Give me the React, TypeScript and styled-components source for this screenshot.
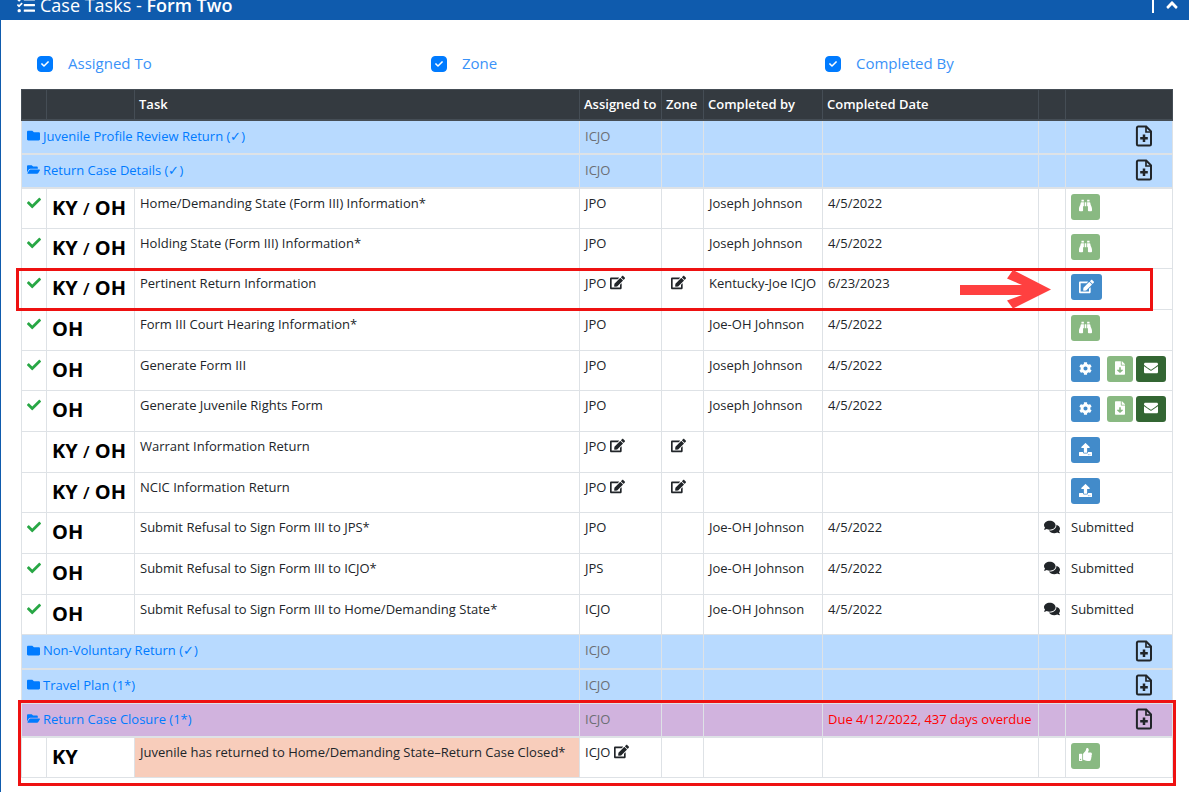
import React, { ReactNode } from "react";
import styled, { createGlobalStyle } from "styled-components";
import {
  FaAngleUp,
  FaBinoculars,
  FaCheck,
  FaCog,
  FaComments,
  FaEdit,
  FaEnvelope,
  FaFileDownload,
  FaFolder,
  FaFolderOpen,
  FaTasks,
  FaThumbsUp,
  FaUpload,
} from "react-icons/fa";

const colors = {
  brand: "#0f5bad",
  link: "#007bff",
  line: "#dee2e6",
  dark: "#343a40",
  text: "#212529",
  blueRow: "#b8daff",
  purpleRow: "#d1b3de",
  due: "#f8cdbb",
  marker: "#ee1111",
  green: "#89b982",
  darkGreen: "#336633",
  blue: "#428bca",
};

const GlobalStyle = createGlobalStyle`
  *, *::before, *::after { box-sizing: border-box; }
  body {
    margin: 0;
    background: #fff;
    color: ${colors.text};
    font-family: "Open Sans", "Noto Sans", sans-serif;
    font-size: 13px;
    line-height: 20px;
  }
  button, input { font: inherit; margin: 0; }
`;

const Panel = styled.section`
  min-height: 100vh;
  border-left: 1px solid ${colors.brand};
  overflow: hidden;
`;

const PanelHeader = styled.header`
  display: flex;
  align-items: flex-end;
  justify-content: space-between;
  height: 20px;
  padding: 0 8px 0 16px;
  overflow: hidden;
  background: ${colors.brand};
  color: #fff;
`;

const Title = styled.h1`
  display: flex;
  align-items: center;
  gap: 5px;
  margin: 0;
  font-size: 18px;
  font-weight: 400;
  line-height: 30px;
  white-space: nowrap;
  b { font-weight: 600; }
`;

const HeaderTools = styled.div`
  display: flex;
  align-items: center;
  gap: 9px;
  height: 30px;
`;

const Divider = styled.span`
  width: 2px;
  height: 16px;
  background: #fff;
`;

const CollapseButton = styled.button`
  display: flex;
  padding: 0;
  border: 0;
  background: none;
  color: #fff;
  font-size: 18px;
`;

const Filters = styled.div`
  display: grid;
  grid-template-columns: repeat(3, 1fr);
  margin: 32px 6px 13px 0;
`;

const FilterLabel = styled.label`
  display: flex;
  align-items: center;
  gap: 15px;
  padding-left: 36px;
  color: #3a92f8;
  font-size: 15px;
  font-weight: 500;
  line-height: 24px;
`;

const FilterText = styled.span`
  line-height: 22px;
  padding-bottom: 2px;
`;

const TickBox = styled.span`
  position: relative;
  display: flex;
  width: 16px;
  height: 16px;

  input {
    appearance: none;
    width: 16px;
    height: 16px;
    border: 1px solid ${colors.link};
    border-radius: 4px;
    background: #fff;
  }
  input:checked { background: ${colors.link}; }
  svg {
    position: absolute;
    top: 4px;
    left: 4px;
    width: 8px;
    height: 8px;
    color: #fff;
    pointer-events: none;
  }
`;

const TableWrap = styled.div`
  padding: 0 16px 12px 20px;
`;

const Table = styled.table`
  width: 100%;
  table-layout: fixed;
  border-collapse: collapse;
`;

const Col = styled.col<{ $w?: number }>`
  width: ${(p) => (p.$w ? `${p.$w}px` : "auto")};
`;

const HeadCell = styled.th`
  height: 30px;
  padding: 0 4px;
  border: 1px solid #454d55;
  border-bottom-width: 2px;
  background: ${colors.dark};
  color: #fff;
  font-weight: 600;
  text-align: left;
  white-space: nowrap;
`;

const Group = styled.tbody`
  position: relative;
`;

const GroupRow = styled.tr<{ $overdue?: boolean }>`
  height: 34px;
  background: ${(p) => (p.$overdue ? colors.purpleRow : colors.blueRow)};
`;

const GroupCell = styled.td`
  padding: 0 5px 2px;
  border: 1px solid ${colors.line};
  border-bottom-width: 2px;
  color: #6c6f74;
  font-weight: 500;
  white-space: nowrap;
`;

const GroupLink = styled.a`
  display: flex;
  align-items: center;
  gap: 3px;
  color: ${colors.link};
  text-decoration: none;
  svg { width: auto; height: 13px; }
`;

const Overdue = styled.span`
  color: #f00;
`;

const AddCell = styled(GroupCell)`
  text-align: right;
  padding-right: 19px;
`;

const AddButton = styled.button`
  display: inline-flex;
  padding: 0;
  border: 0;
  background: none;
  color: ${colors.text};
  vertical-align: middle;
`;

const TaskRow = styled.tr`
  position: relative;
  height: 41px;
  &:nth-child(3n) { height: 40px; }
`;

const Cell = styled.td<{ $due?: boolean }>`
  padding: 4px 5px 0;
  border: 1px solid ${colors.line};
  background: ${(p) => (p.$due ? colors.due : "transparent")};
  font-weight: ${(p) => (p.$due ? 500 : 400)};
  vertical-align: top;
  white-space: nowrap;
`;

const StatusCell = styled(Cell)`
  color: #28a745;
  svg { display: block; font-size: 14px; margin-top: 3px; }
`;

const StateCell = styled(Cell)`
  padding-top: 7px;
  color: #000;
  font-size: 20px;
  font-weight: 700;
  line-height: 24px;
  small { font-size: 17px; font-weight: 600; }
`;

const InlineIconButton = styled.button`
  display: inline-flex;
  padding: 0;
  border: 0;
  background: none;
  color: ${colors.text};
  font-size: 15px;
  line-height: 16px;
  vertical-align: -2px;
`;

const ZoneCell = styled(Cell)`
  padding-left: 9px;
`;

const NotesCell = styled(Cell)`
  svg { display: block; font-size: 16px; margin-top: 2px; }
`;

const Submitted = styled.span`
  font-weight: 500;
`;

const Actions = styled.div`
  display: flex;
  gap: 3px;
`;

const ActionButton = styled.button<{ $tone: string; $gapAfter?: boolean; $narrow?: boolean }>`
  display: flex;
  align-items: center;
  justify-content: center;
  height: 26px;
  padding: 0 8px 2px;
  margin-top: 1px;
  margin-right: ${(p) => (p.$gapAfter ? "4px" : "0")};
  border: 0;
  border-radius: 3px;
  background: ${(p) => p.$tone};
  color: #fff;
  font-size: 13px;
  svg { ${(p) => (p.$narrow ? "width: 10px; height: 14px;" : "")} }
`;

const RowMarker = styled.span`
  position: absolute;
  top: -1px;
  right: 20px;
  bottom: -1px;
  left: -6px;
  border: 3px solid ${colors.marker};
  pointer-events: none;
`;

const GroupMarker = styled.span`
  position: absolute;
  top: -3px;
  right: -3px;
  bottom: -8px;
  left: -4px;
  border: 3px solid ${colors.marker};
  pointer-events: none;
`;

const Arrow = styled.svg`
  position: absolute;
  top: 1px;
  right: 122px;
  width: 91px;
  height: 39px;
  pointer-events: none;
`;

const AddFileIcon = () => (
  <svg width="18" height="22" viewBox="0 0 18 22" fill="none" stroke="currentColor" aria-hidden="true">
    <path d="M3.2 1.6h8L16 6.4v12.8a1.300 1.300 0 0 1-1.300 1.300H3.200a1.300 1.300 0 0 1-1.300-1.300V2.900a1.300 1.300 0 0 1 1.300-1.300z" strokeWidth="2" />
    <path d="M11 2v5h5" strokeWidth="1.700" />
    <path d="M9 9.500v7.500M5.200 13.200h7.600" strokeWidth="2.500" />
  </svg>
);

type Kind = "view" | "edit" | "generate" | "upload" | "submitted" | "approve";

interface Task {
  done?: boolean;
  state: string;
  name: string;
  assigned: string;
  canAssign?: boolean;
  canZone?: boolean;
  by?: string;
  date?: string;
  kind: Kind;
  marked?: boolean;
  due?: boolean;
}

interface TaskGroup {
  name: string;
  open?: boolean;
  overdue?: string;
  tasks: Task[];
}

const groups: TaskGroup[] = [
  { name: "Juvenile Profile Review Return (✓)", tasks: [] },
  {
    name: "Return Case Details (✓)",
    open: true,
    tasks: [
      { done: true, state: "KY / OH", name: "Home/Demanding State (Form III) Information*", assigned: "JPO", by: "Joseph Johnson", date: "4/5/2022", kind: "view" },
      { done: true, state: "KY / OH", name: "Holding State (Form III) Information*", assigned: "JPO", by: "Joseph Johnson", date: "4/5/2022", kind: "view" },
      { done: true, state: "KY / OH", name: "Pertinent Return Information", assigned: "JPO", canAssign: true, canZone: true, by: "Kentucky-Joe ICJO", date: "6/23/2023", kind: "edit", marked: true },
      { done: true, state: "OH", name: "Form III Court Hearing Information*", assigned: "JPO", by: "Joe-OH Johnson", date: "4/5/2022", kind: "view" },
      { done: true, state: "OH", name: "Generate Form III", assigned: "JPO", by: "Joseph Johnson", date: "4/5/2022", kind: "generate" },
      { done: true, state: "OH", name: "Generate Juvenile Rights Form", assigned: "JPO", by: "Joseph Johnson", date: "4/5/2022", kind: "generate" },
      { state: "KY / OH", name: "Warrant Information Return", assigned: "JPO", canAssign: true, canZone: true, kind: "upload" },
      { state: "KY / OH", name: "NCIC Information Return", assigned: "JPO", canAssign: true, canZone: true, kind: "upload" },
      { done: true, state: "OH", name: "Submit Refusal to Sign Form III to JPS*", assigned: "JPO", by: "Joe-OH Johnson", date: "4/5/2022", kind: "submitted" },
      { done: true, state: "OH", name: "Submit Refusal to Sign Form III to ICJO*", assigned: "JPS", by: "Joe-OH Johnson", date: "4/5/2022", kind: "submitted" },
      { done: true, state: "OH", name: "Submit Refusal to Sign Form III to Home/Demanding State*", assigned: "ICJO", by: "Joe-OH Johnson", date: "4/5/2022", kind: "submitted" },
    ],
  },
  { name: "Non-Voluntary Return (✓)", tasks: [] },
  { name: "Travel Plan (1*)", tasks: [] },
  {
    name: "Return Case Closure (1*)",
    open: true,
    overdue: "Due 4/12/2022, 437 days overdue",
    tasks: [
      { state: "KY", name: "Juvenile has returned to Home/Demanding State–Return Case Closed*", assigned: "ICJO", canAssign: true, kind: "approve", due: true },
    ],
  },
];

const StateLabel = ({ state }: { state: string }) => {
  const [first, second] = state.split(" / ");
  return second ? (
    <>
      {first} <small>/</small> {second}
    </>
  ) : (
    <>{first}</>
  );
};

const EditButton = ({ label }: { label: string }) => (
  <InlineIconButton type="button" aria-label={label}>
    <FaEdit />
  </InlineIconButton>
);

interface ActionProps {
  tone: string;
  label: string;
  gapAfter?: boolean;
  narrow?: boolean;
  children: ReactNode;
}

const Action = ({ tone, label, gapAfter, narrow, children }: ActionProps) => (
  <ActionButton type="button" $tone={tone} $gapAfter={gapAfter} $narrow={narrow} aria-label={label}>
    {children}
  </ActionButton>
);

const TaskActions = ({ kind }: { kind: Kind }) => {
  switch (kind) {
    case "view":
      return <Action tone={colors.green} label="View"><FaBinoculars /></Action>;
    case "edit":
      return <Action tone={colors.blue} label="Edit"><FaEdit size={15} /></Action>;
    case "generate":
      return (
        <>
          <Action tone={colors.blue} label="Generate" gapAfter><FaCog /></Action>
          <Action tone={colors.green} label="Download" narrow><FaFileDownload /></Action>
          <Action tone={colors.darkGreen} label="Email"><FaEnvelope size={14} /></Action>
        </>
      );
    case "upload":
      return <Action tone={colors.blue} label="Upload"><FaUpload /></Action>;
    case "approve":
      return <Action tone={colors.green} label="Approve"><FaThumbsUp /></Action>;
    default:
      return <Submitted>Submitted</Submitted>;
  }
};

const TaskLine = ({ task }: { task: Task }) => (
  <TaskRow>
    <StatusCell>{task.done && <FaCheck />}</StatusCell>
    <StateCell><StateLabel state={task.state} /></StateCell>
    <Cell $due={task.due}>{task.name}</Cell>
    <Cell>
      {task.assigned} {task.canAssign && <EditButton label="Change assignee" />}
    </Cell>
    <ZoneCell>{task.canZone && <EditButton label="Change zone" />}</ZoneCell>
    <Cell>{task.by}</Cell>
    <Cell>{task.date}</Cell>
    <NotesCell>{task.kind === "submitted" && <FaComments />}</NotesCell>
    <Cell>
      <Actions><TaskActions kind={task.kind} /></Actions>
      {task.marked && (
        <>
          <RowMarker />
          <Arrow viewBox="0 0 91 39" aria-hidden="true">
            <path d="M0 15h62L47 8.500 53 0 91 19.500 53 38.500 47 30.500 62 25H0z" fill="#ff4040" />
          </Arrow>
        </>
      )}
    </Cell>
  </TaskRow>
);

export default function App() {
  return (
    <>
      <GlobalStyle />
      <Panel>
        <PanelHeader>
          <Title>
            <FaTasks />
            <span>Case Tasks - <b>Form Two</b></span>
          </Title>
          <HeaderTools>
            <Divider />
            <CollapseButton type="button" aria-label="Collapse"><FaAngleUp /></CollapseButton>
          </HeaderTools>
        </PanelHeader>
        <Filters>
          {["Assigned To", "Zone", "Completed By"].map((name) => (
            <FilterLabel key={name}>
              <TickBox>
                <input type="checkbox" defaultChecked />
                <FaCheck />
              </TickBox>
              <FilterText>{name}</FilterText>
            </FilterLabel>
          ))}
        </Filters>
        <TableWrap>
          <Table>
            <colgroup>
              <Col $w={25} />
              <Col $w={88} />
              <Col />
              <Col $w={82} />
              <Col $w={42} />
              <Col $w={119} />
              <Col $w={216} />
              <Col $w={27} />
              <Col $w={107} />
            </colgroup>
            <thead>
              <tr>
                {["", "", "Task", "Assigned to", "Zone", "Completed by", "Completed Date", "", ""].map((name, i) => (
                  <HeadCell key={i} scope="col">{name}</HeadCell>
                ))}
              </tr>
            </thead>
            {groups.map((group) => (
              <Group key={group.name}>
                <GroupRow $overdue={!!group.overdue}>
                  <GroupCell colSpan={3}>
                    <GroupLink href="#">
                      {group.open ? <FaFolderOpen /> : <FaFolder />}
                      {group.name}
                    </GroupLink>
                  </GroupCell>
                  <GroupCell>ICJO</GroupCell>
                  <GroupCell />
                  <GroupCell />
                  <GroupCell>{group.overdue && <Overdue>{group.overdue}</Overdue>}</GroupCell>
                  <GroupCell />
                  <AddCell>
                    <AddButton type="button" aria-label={`Add document to ${group.name}`}><AddFileIcon /></AddButton>
                    {group.overdue && <GroupMarker />}
                  </AddCell>
                </GroupRow>
                {group.tasks.map((task) => (
                  <TaskLine key={task.name} task={task} />
                ))}
              </Group>
            ))}
          </Table>
        </TableWrap>
      </Panel>
    </>
  );
}
